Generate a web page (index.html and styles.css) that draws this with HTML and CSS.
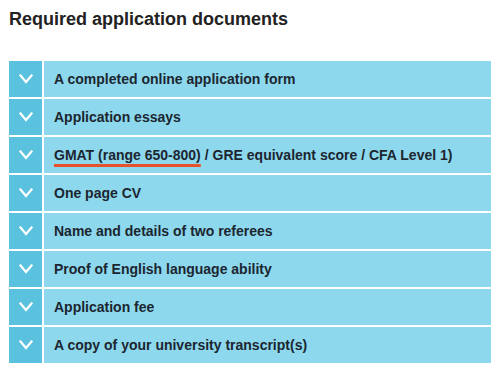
FILE: index.html
```html
<!DOCTYPE html>
<html lang="en">
<head>
  <meta charset="UTF-8">
  <title>Required application documents</title>
  <link rel="stylesheet" href="styles.css">
</head>
<body>
  <div class="container">
    <h2 class="heading">Required application documents</h2>

    <ul class="doc-list">
      <li class="doc-row">
        <span class="doc-toggle"><svg viewBox="0 0 14 10" width="14" height="10"><path d="M1.5 1.5 L7 8 L12.5 1.5" /></svg></span>
        <span class="doc-label">A completed online application form</span>
      </li>
      <li class="doc-row">
        <span class="doc-toggle"><svg viewBox="0 0 14 10" width="14" height="10"><path d="M1.5 1.5 L7 8 L12.5 1.5" /></svg></span>
        <span class="doc-label">Application essays</span>
      </li>
      <li class="doc-row">
        <span class="doc-toggle"><svg viewBox="0 0 14 10" width="14" height="10"><path d="M1.5 1.5 L7 8 L12.5 1.5" /></svg></span>
        <span class="doc-label"><span class="marked">GMAT (range 650-800)</span> / GRE equivalent score / CFA Level 1)</span>
      </li>
      <li class="doc-row">
        <span class="doc-toggle"><svg viewBox="0 0 14 10" width="14" height="10"><path d="M1.5 1.5 L7 8 L12.5 1.5" /></svg></span>
        <span class="doc-label">One page CV</span>
      </li>
      <li class="doc-row">
        <span class="doc-toggle"><svg viewBox="0 0 14 10" width="14" height="10"><path d="M1.5 1.5 L7 8 L12.5 1.5" /></svg></span>
        <span class="doc-label">Name and details of two referees</span>
      </li>
      <li class="doc-row">
        <span class="doc-toggle"><svg viewBox="0 0 14 10" width="14" height="10"><path d="M1.5 1.5 L7 8 L12.5 1.5" /></svg></span>
        <span class="doc-label">Proof of English language ability</span>
      </li>
      <li class="doc-row">
        <span class="doc-toggle"><svg viewBox="0 0 14 10" width="14" height="10"><path d="M1.5 1.5 L7 8 L12.5 1.5" /></svg></span>
        <span class="doc-label">Application fee</span>
      </li>
      <li class="doc-row">
        <span class="doc-toggle"><svg viewBox="0 0 14 10" width="14" height="10"><path d="M1.5 1.5 L7 8 L12.5 1.5" /></svg></span>
        <span class="doc-label">A copy of your university transcript(s)</span>
      </li>
    </ul>
  </div>
</body>
</html>
```

FILE: styles.css
```css
body {
  margin: 0;
  padding: 0;
  background-color: #ffffff;
  font-family: "Liberation Sans", Arial, sans-serif;
  color: #1c2630;
}
.container {
  padding: 9px 8px 0 9px;
}
.heading {
  margin: 0;
  font-size: 18px;
  line-height: 20px;
  font-weight: bold;
  color: #222222;
}
.doc-list {
  list-style: none;
  margin: 32px 0 0 0;
  padding: 0;
  display: flex;
  flex-direction: column;
  gap: 2px;
}
.doc-row {
  display: flex;
  gap: 2px;
  height: 36px;
}
.doc-toggle {
  flex: 0 0 33px;
  background-color: #5ac2df;
  display: flex;
  align-items: center;
  justify-content: center;
}
.doc-toggle svg path {
  fill: none;
  stroke: #ffffff;
  stroke-width: 2.2;
  stroke-linecap: square;
}
.doc-label {
  flex: 1;
  background-color: #8dd8ed;
  display: flex;
  align-items: center;
  padding-left: 10px;
  font-size: 14px;
  font-weight: bold;
  white-space: nowrap;
}
.marked {
  text-decoration: underline;
  text-decoration-color: #e8522b;
  text-decoration-thickness: 3px;
  text-underline-offset: 4px;
  margin-right: 4px;
}
```
